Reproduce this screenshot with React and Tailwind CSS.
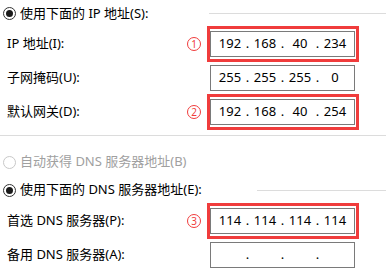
import React, { Fragment } from 'react';

const ipRows = [
  { label: 'IP 地址(I):', mark: '1', parts: ['192', '168', '40', '234'] },
  { label: '子网掩码(U):', mark: null, parts: ['255', '255', '255', '0'] },
  { label: '默认网关(D):', mark: '2', parts: ['192', '168', '40', '254'] },
];

const dnsRows = [
  { label: '首选 DNS 服务器(P):', mark: '3', parts: ['114', '114', '114', '114'] },
  { label: '备用 DNS 服务器(A):', mark: null, parts: ['', '', '', ''] },
];

function Radio({ checked, disabled }) {
  return (
    <span
      className={`flex h-[13px] w-[13px] shrink-0 items-center justify-center rounded-full border ${
        disabled ? 'border-[#c8c8c8]' : 'border-[#333333]'
      }`}
    >
      {checked && <span className="h-[7px] w-[7px] rounded-full bg-[#1a1a1a]" />}
    </span>
  );
}

function IpField({ parts }) {
  return (
    <div className="flex h-[26px] w-[145px] items-center border border-[#7a7a7a] bg-white pl-[6px] text-[13px] text-black">
      {parts.map((p, i) => (
        <Fragment key={i}>
          {i > 0 && <span className="w-[9px] text-center">.</span>}
          <span className="w-[26px] text-center">{p}</span>
        </Fragment>
      ))}
    </div>
  );
}

function FieldRow({ label, mark, parts }) {
  return (
    <div className="flex h-[34px] items-center">
      <span className="w-[187px] pl-[7px] text-[13px] text-black">{label}</span>
      {mark ? (
        <span className="flex h-[14px] w-[14px] items-center justify-center rounded-full border border-[#f03c3c] text-[10px] leading-none text-[#f03c3c]">
          {mark}
        </span>
      ) : (
        <span className="w-[14px]" />
      )}
      <div
        className={`ml-[6px] border-[3px] py-[2px] pr-[1px] ${
          mark ? 'border-[#f03c3c]' : 'border-transparent'
        }`}
      >
        <IpField parts={parts} />
      </div>
    </div>
  );
}

export default function App() {
  return (
    <div className="h-[277px] w-[386px] overflow-hidden bg-white font-['Noto_Sans','Noto_Sans_CJK_SC',sans-serif]">
      {/* IP section */}
      <div className="flex h-[27px] items-center pl-[3px]">
        <Radio checked />
        <span className="ml-[4px] text-[13px] text-black">使用下面的 IP 地址(S):</span>
        <span className="ml-[61px] h-px flex-1 bg-[#dcdcdc]" />
      </div>
      {ipRows.map((r) => (
        <FieldRow key={r.label} {...r} />
      ))}

      <div className="mt-[6px] h-px w-full bg-[#dcdcdc]" />

      {/* DNS section */}
      <div className="mt-[13px] flex h-[26px] items-center pl-[3px]">
        <Radio disabled />
        <span className="ml-[4px] text-[13px] text-[#a0a0a0]">自动获得 DNS 服务器地址(B)</span>
      </div>
      <div className="mt-[2px] flex h-[26px] items-center pl-[3px]">
        <Radio checked />
        <span className="ml-[4px] text-[13px] text-black">使用下面的 DNS 服务器地址(E):</span>
        <span className="ml-[55px] h-px flex-1 bg-[#dcdcdc]" />
      </div>
      <div className="mt-[1px]">
        {dnsRows.map((r) => (
          <FieldRow key={r.label} {...r} />
        ))}
      </div>
    </div>
  );
}
